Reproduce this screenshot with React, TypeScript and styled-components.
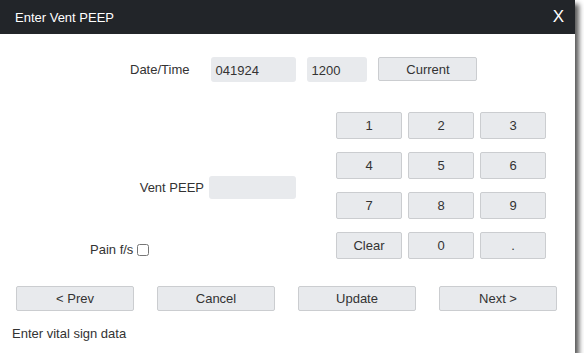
import React from "react";
import styled, { createGlobalStyle } from "styled-components";

const GlobalStyle = createGlobalStyle`
  html, body {
    margin: 0;
    padding: 0;
    background: #ffffff;
    font-family: "Liberation Sans", Arial, sans-serif;
  }
`;

const keys = ["1", "2", "3", "4", "5", "6", "7", "8", "9", "Clear", "0", "."];
const navButtons = ["< Prev", "Cancel", "Update", "Next >"];

const App: React.FC = () => {
  return (
    <>
      <GlobalStyle />
      <Dialog>
        <Header>
          <HeaderTitle>Enter Vent PEEP</HeaderTitle>
          <CloseButton>X</CloseButton>
        </Header>
        <Body>
          <DateRow>
            <Label>Date/Time</Label>
            <Field $width={85} $gap={22} defaultValue="041924" />
            <Field $width={60} $gap={11} defaultValue="1200" />
            <CurrentButton>Current</CurrentButton>
          </DateRow>

          <Middle>
            <LeftColumn>
              <VentRow>
                <Label>Vent PEEP</Label>
                <Field $width={87} $gap={5} $height={23} />
              </VentRow>
              <PainRow>
                <Label>Pain f/s</Label>
                <Check type="checkbox" />
              </PainRow>
            </LeftColumn>
            <Keypad>
              {keys.map((k) => (
                <PadButton key={k}>{k}</PadButton>
              ))}
            </Keypad>
          </Middle>

          <NavRow>
            {navButtons.map((b) => (
              <NavButton key={b}>{b}</NavButton>
            ))}
          </NavRow>

          <Status>Enter vital sign data</Status>
        </Body>
      </Dialog>
    </>
  );
};

const Dialog = styled.div`
  width: 575px;
  height: 353px;
  background: #ffffff;
  box-shadow: 4px 4px 5px rgba(0, 0, 0, 0.65);
  display: flex;
  flex-direction: column;
  overflow: hidden;
`;

const Header = styled.div`
  height: 34px;
  background: #222529;
  display: flex;
  align-items: center;
  justify-content: space-between;
  padding: 0 11px 0 15px;
  color: #ffffff;
`;

const HeaderTitle = styled.span`
  font-size: 13px;
`;

const CloseButton = styled.span`
  font-size: 17px;
  line-height: 1;
  margin-top: -1px;
`;

const Body = styled.div`
  display: flex;
  flex-direction: column;
  padding-top: 23px;
  color: #333333;
  font-size: 13px;
`;

const DateRow = styled.div`
  display: flex;
  align-items: center;
  padding-left: 130px;
  height: 25px;
`;

const Label = styled.span`
  font-size: 13px;
  color: #333333;
  white-space: nowrap;
`;

const Field = styled.input<{ $width: number; $gap: number; $height?: number }>`
  box-sizing: border-box;
  width: ${(p) => p.$width}px;
  height: ${(p) => p.$height ?? 25}px;
  margin-left: ${(p) => p.$gap}px;
  border: none;
  border-radius: 3px;
  background: #e8eaed;
  padding: 1px 4px 0;
  font-family: inherit;
  font-size: 13px;
  color: #333333;
  outline: none;
`;

const ButtonBase = styled.button`
  box-sizing: border-box;
  border: 1px solid #cbcdd0;
  border-radius: 2px;
  background: #e8eaed;
  font-family: "Liberation Sans", Arial, sans-serif;
  font-size: 13px;
  color: #333333;
  padding: 0;
  cursor: pointer;
`;

const CurrentButton = styled(ButtonBase)`
  width: 99px;
  height: 24px;
  margin-left: 11px;
  margin-top: -1px;
`;

const Middle = styled.div`
  display: flex;
  margin-top: 30px;
`;

const LeftColumn = styled.div`
  width: 336px;
  display: flex;
  flex-direction: column;
  padding-top: 64px;
`;

const VentRow = styled.div`
  display: flex;
  align-items: center;
  justify-content: flex-end;
  padding-right: 40px;
`;

const PainRow = styled.div`
  display: flex;
  align-items: center;
  padding-left: 90px;
  margin-top: 44px;
  height: 13px;
`;

const Check = styled.input`
  width: 12px;
  height: 12px;
  margin: 0 0 0 4px;
`;

const Keypad = styled.div`
  display: grid;
  grid-template-columns: repeat(3, 66px);
  grid-auto-rows: 27px;
  column-gap: 6px;
  row-gap: 13px;
`;

const PadButton = styled(ButtonBase)``;

const NavRow = styled.div`
  display: flex;
  justify-content: space-between;
  padding: 0 18px 0 16px;
  margin-top: 27px;
`;

const NavButton = styled(ButtonBase)`
  width: 118px;
  height: 25px;
`;

const Status = styled.div`
  padding-left: 12px;
  margin-top: 15px;
  font-size: 13px;
  line-height: 15px;
  color: #333333;
`;

export default App;
